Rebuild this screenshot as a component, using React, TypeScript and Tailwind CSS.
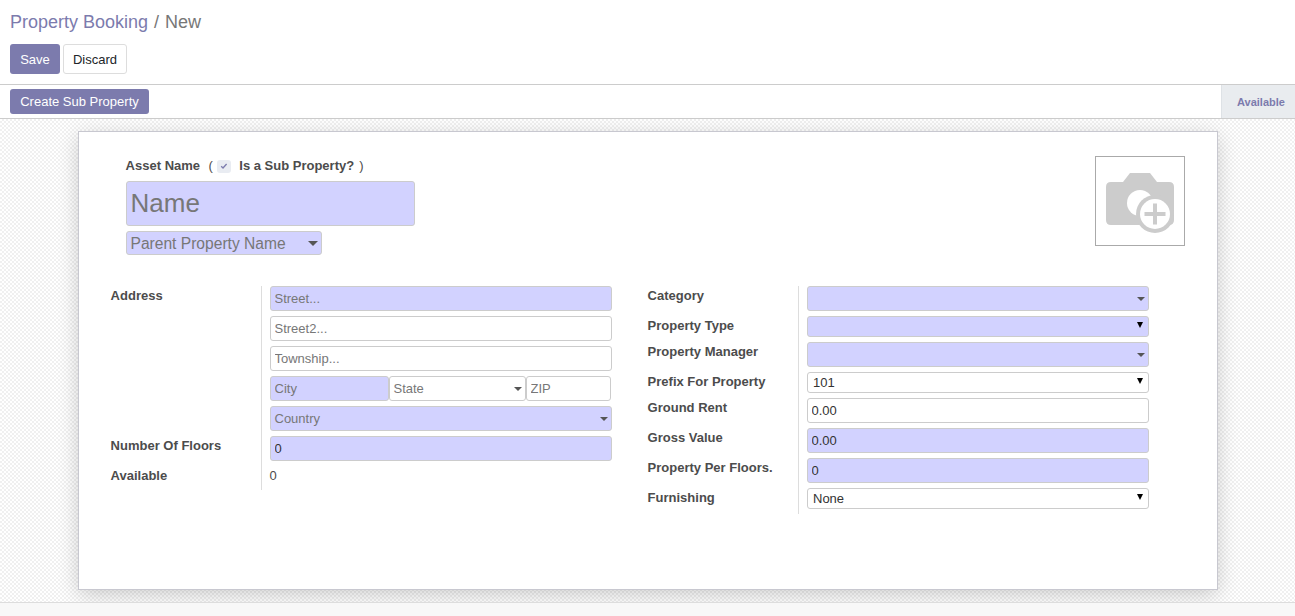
const FONT = "font-['Liberation_Sans',Arial,sans-serif]"

const inputBase =
  'h-[25px] min-w-0 rounded-[3px] border border-[#ccc] pl-[3.5px] pr-1 text-[13px] text-[#333] outline-none placeholder:text-[#777]'
const req = 'bg-[#d2d2ff]'

function Caret({ big }: { big?: boolean }) {
  return big ? (
    <span className="h-0 w-0 border-x-[5px] border-t-[5px] border-x-transparent border-t-[#555]" />
  ) : (
    <span className="h-0 w-0 border-x-[4px] border-t-[4px] border-x-transparent border-t-[#555]" />
  )
}

function ComboBox({ text, required, className }: { text?: string; required?: boolean; className?: string }) {
  return (
    <div className={`flex h-[25px] items-center justify-between rounded-[3px] border border-[#ccc] pl-[3.5px] pr-[3px] text-[13px] text-[#777] ${required ? req : 'bg-white'} ${className ?? ''}`}>
      <span>{text}</span>
      <Caret />
    </div>
  )
}

function NativeSelect({ value, required }: { value?: string; required?: boolean }) {
  return (
    <div className="relative h-[21px] w-full">
      <select className={`block h-[21px] w-full appearance-none rounded-[3px] border border-[#ccc] pl-[5px] text-[13px] text-[#333] outline-none ${required ? req : 'bg-white'}`}>
        <option>{value}</option>
      </select>
      <span className="absolute right-[6px] top-[6px] h-0 w-0 border-x-[3px] border-t-[6px] border-x-transparent border-t-black" />
    </div>
  )
}

function Label({ children, className }: { children: React.ReactNode; className?: string }) {
  return <div className={`ml-[-0.4px] w-[150px] shrink-0 text-[13px] font-bold leading-[18px] text-[#4c4c4c] ${className ?? ''}`}>{children}</div>
}

function CameraIcon() {
  return (
    <svg className="mt-[4px]" width="68" height="60" viewBox="0 0 68 60">
      <path d="M24 0h20l7 9h12q5 0 5 5v33q0 5-5 5H5q-5 0-5-5V14q0-5 5-5h12z" fill="#ccc" />
      <circle cx="34" cy="30" r="13" fill="#fff" />
      <circle cx="49" cy="41" r="19" fill="#ccc" />
      <circle cx="49" cy="41" r="15" fill="#fff" />
      <path d="M49 30.5v21M38.5 41h21" stroke="#ccc" strokeWidth="4" />
    </svg>
  )
}

export default function App() {
  return (
    <div className={`flex h-[616px] w-[1295px] flex-col overflow-hidden bg-white ${FONT}`}>
      <div className="h-[85px] shrink-0 border-b border-[#ccc] px-[10px] pt-[11px]">
        <div className="flex h-[22px] items-center text-[18px] leading-[22px]">
          <span className="text-[#7c7bad]">Property Booking</span>
          <span className="ml-[6px] text-[#777]">/</span>
          <span className="ml-[6px] text-[#777]">New</span>
        </div>
        <div className="mt-[11px] flex gap-[3px]">
          <button className="h-[30px] w-[50px] rounded-[3px] bg-[#7c7bad] pt-[1px] text-[13px] text-white">Save</button>
          <button className="h-[30px] w-[64px] rounded-[3px] border border-[#ddd] bg-white pt-[1px] text-[13px] text-[#212529]">Discard</button>
        </div>
      </div>

      <div className="flex h-[34px] shrink-0 items-stretch justify-between border-b border-[#ccc] pl-[10px]">
        <button className="mt-[4px] h-[25px] w-[139px] rounded-[3px] bg-[#7c7bad] pt-[1px] text-[13px] text-white">Create Sub Property</button>
        <div className="flex w-[74px] items-center justify-center border-l border-[#dee2e6] bg-[#e9ecef] pl-[5px] pt-[1px] text-[11px] font-bold text-[#7c7bad]">Available</div>
      </div>

      <div className="min-h-0 flex-1 bg-[repeating-conic-gradient(#f0f0f0_0_25%,#ffffff_0_50%)] bg-[length:4px_4px] pl-[78px] pt-[12px]">
        <div className="h-[459px] w-[1140px] border border-[#c8c8d0] bg-white shadow-[0_5px_20px_-1px_rgba(0,0,0,0.2)]">
          <div className="flex justify-between pl-[47px] pr-[32px] pt-[24px]">
            <div>
              <div className="ml-[-0.4px] flex h-[20px] items-center text-[13px] font-bold text-[#4c4c4c]">
                <span>Asset Name</span>
                <span className="ml-[8.5px] font-normal">(</span>
                <span className="ml-[4px] flex h-[13px] w-[14px] items-center justify-center rounded-[3px] bg-[#e9ecf2]">
                  <svg width="8" height="8" viewBox="0 0 8 8">
                    <path d="M1.2 4.2l1.8 1.8 3.6-4" fill="none" stroke="#7c7bad" strokeWidth="1.3" />
                  </svg>
                </span>
                <span className="ml-[8.4px]">Is a Sub Property?</span>
                <span className="ml-[5px] font-normal">)</span>
              </div>
              <input placeholder="Name" className={`mt-[5px] block h-[45px] w-[289px] rounded-[3px] border border-[#ccc] pl-[3.5px] text-[26px] outline-none placeholder:text-[#777] ${req}`} />
              <div className={`mt-[5px] flex h-[24px] w-[196px] items-center justify-between rounded-[3px] border border-[#ccc] pl-[3.5px] pr-[3px] text-[15.6px] text-[#777] ${req}`}>
                <span className="pt-[1px]">Parent Property Name</span>
                <Caret big />
              </div>
            </div>
            <div className="flex h-[90px] w-[90px] items-center justify-center border border-[#aaa]">
              <CameraIcon />
            </div>
          </div>

          <div className="mt-[31px] flex pl-[32px]">
            <div className="flex w-[501px]">
              <div className="flex w-[150px] shrink-0 flex-col">
                <Label className="pt-[1px]">Address</Label>
                <Label className="mt-[132px]">Number Of Floors</Label>
                <Label className="mt-[12px]">Available</Label>
              </div>
              <div className="flex h-[204px] w-[351px] flex-col gap-[5px] border-l border-[#ddd] pl-[8px]">
                <input placeholder="Street..." className={`${inputBase} w-full ${req}`} />
                <input placeholder="Street2..." className={`${inputBase} w-full bg-white`} />
                <input placeholder="Township..." className={`${inputBase} w-full bg-white`} />
                <div className="flex pr-[1px]">
                  <input placeholder="City" className={`${inputBase} w-[119px] shrink-0 ${req}`} />
                  <ComboBox text="State" className="w-[137px] shrink-0" />
                  <input placeholder="ZIP" className={`${inputBase} w-[85px] bg-white`} />
                </div>
                <ComboBox text="Country" required />
                <input defaultValue="0" className={`${inputBase} w-full ${req}`} />
                <div className="ml-[-0.5px] pt-[1px] text-[13px] leading-[18px] text-[#4c4c4c]">0</div>
              </div>
            </div>

            <div className="ml-[36px] flex w-[501px]">
              <div className="flex w-[150px] shrink-0 flex-col">
                <Label className="pt-[1px]">Category</Label>
                <Label className="mt-[12px]">Property Type</Label>
                <Label className="mt-[8px]">Property Manager</Label>
                <Label className="mt-[12px]">Prefix For Property</Label>
                <Label className="mt-[8px]">Ground Rent</Label>
                <Label className="mt-[12px]">Gross Value</Label>
                <Label className="mt-[12px]">Property Per Floors.</Label>
                <Label className="mt-[12px]">Furnishing</Label>
              </div>
              <div className="flex h-[228px] w-[351px] flex-col gap-[5px] border-l border-[#ddd] pl-[8px]">
                <ComboBox required />
                <NativeSelect required />
                <ComboBox required />
                <NativeSelect value="101" />
                <input defaultValue="0.00" className={`${inputBase} w-full bg-white`} />
                <input defaultValue="0.00" className={`${inputBase} w-full ${req}`} />
                <input defaultValue="0" className={`${inputBase} w-full ${req}`} />
                <NativeSelect value="None" />
              </div>
            </div>
          </div>
        </div>
      </div>

      <div className="h-[14px] shrink-0 border-t border-[#ddd] bg-[#f8f8f8]" />
    </div>
  )
}
